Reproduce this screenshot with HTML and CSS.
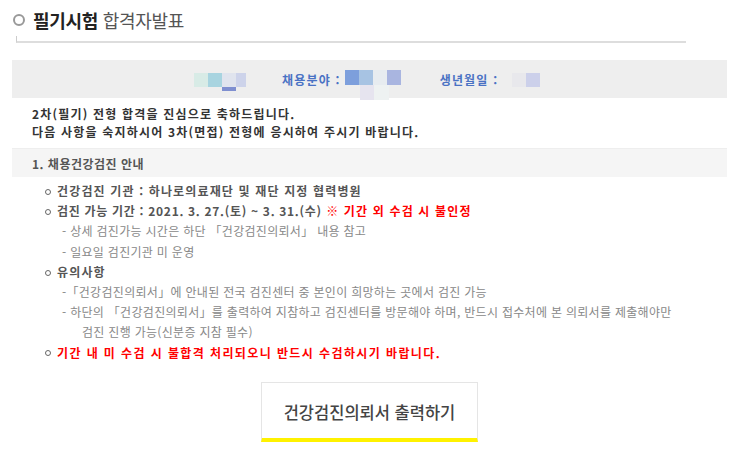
FILE: index.html
```html
<!DOCTYPE html>
<html lang="ko">
<head>
  <meta charset="UTF-8">
  <meta name="viewport" content="width=device-width, initial-scale=1.0">
  <title>필기시험 합격자발표</title>
  <link rel="stylesheet" href="styles.css">
</head>
<body>

  <div class="page">
    <h1 class="title"><span class="ring"></span><b>필기시험</b> 합격자발표</h1>
    <div class="title-line"></div>

    <div class="info-bar">
      <span class="mosaic mosaic-name">
        <i class="c1"></i><i class="c2"></i><i class="c3"></i><i class="c4"></i>
      </span>
      <span class="label label-field">채용분야 :</span>
      <span class="mosaic mosaic-field">
        <i class="c5"></i><i class="c6"></i><i class="c7"></i><i class="c8"></i>
      </span>
      <span class="label label-birth">생년월일 :</span>
      <span class="mosaic mosaic-birth">
        <i class="c9"></i><i class="c10"></i>
      </span>
    </div>

    <div class="greeting">
      <p>2차(필기) 전형 합격을 진심으로 축하드립니다.</p>
      <p>다음 사항을 숙지하시어 3차(면접) 전형에 응시하여 주시기 바랍니다.</p>
    </div>

    <div class="section-head">1. 채용건강검진 안내</div>

    <ul class="notice">
      <li class="point">건강검진 기관 : 하나로의료재단 및 재단 지정 협력병원</li>
      <li class="point"><span class="date">검진 가능 기간 : 2021. 3. 27.(토) ~ 3. 31.(수)</span> <span class="warn">※ 기간 외 수검 시 불인정</span></li>
      <li class="sub">- 상세 검진가능 시간은 하단 「건강검진의뢰서」 내용 참고</li>
      <li class="sub">- 일요일 검진기관 미 운영</li>
      <li class="point">유의사항</li>
      <li class="sub">-「건강검진의뢰서」에 안내된 전국 검진센터 중 본인이 희망하는 곳에서 검진 가능</li>
      <li class="sub">- 하단의 「건강검진의뢰서」를 출력하여 지참하고 검진센터를 방문해야 하며, 반드시 접수처에 본 의뢰서를 제출해야만</li>
      <li class="sub more">검진 진행 가능(신분증 지참 필수)</li>
      <li class="point warn last">기간 내 미 수검 시 불합격 처리되오니 반드시 수검하시기 바랍니다.</li>
    </ul>

    <div class="btn-wrap">
      <a class="print-btn" href="#">건강검진의뢰서 출력하기</a>
    </div>
  </div>

</body>
</html>
```

FILE: styles.css
```css
body {
  margin: 0;
  background-color: #fff;
  font-family: "Noto Sans CJK KR", "Noto Sans", sans-serif;
  font-size: 12px;
  color: #444;
}
.page {
  width: 715px;
  margin-left: 12px;
}
.title {
  display: flex;
  align-items: center;
  margin: 0;
  padding-top: 7px;
  height: 26px;
  font-size: 18px;
  font-weight: 400;
  color: #555;
  letter-spacing: -0.3px;
  white-space: pre;
}
.title b {
  font-weight: 700;
  color: #222;
}
.ring {
  width: 8px;
  height: 8px;
  border: 2.5px solid #999;
  border-radius: 50%;
  margin: 0 8px 0 1px;
}
.title-line {
  width: 669px;
  height: 5px;
  margin: 3px 0 0 4px;
  border-left: 1px solid #ccc;
  border-bottom: 2px solid #ddd;
}

/* 개인정보 모자이크 */
.info-bar {
  display: flex;
  align-items: center;
  height: 38px;
  margin-top: 17px;
  padding-left: 182px;
  background-color: #eee;
}
.mosaic {
  display: flex;
  position: relative;
}
.mosaic i {
  display: block;
  width: 14px;
  height: 14px;
}
.mosaic-name { margin-top: 1px; }
.mosaic-name::after {
  content: "";
  position: absolute;
  left: 28px;
  top: 14px;
  width: 14px;
  height: 4px;
  background-color: #7f8fd0;
}
.c1 { background-color: #d8ebe6; }
.c2 { background-color: #a8d4e0; }
.c3 { background-color: #e0e4ee; }
.c4 { background-color: #cdd3ea; width: 10px !important; }
.mosaic-field { margin: 12px 0 0 4px; height: 30px; }
.mosaic-field i { height: 15px; }
.mosaic-field::after {
  content: "";
  position: absolute;
  left: 15px;
  top: 15px;
  width: 29px;
  height: 15px;
  background: linear-gradient(90deg, #e6e4ef 50%, #eef2f2 50%);
}
.c5 { background-color: #7d9fdc; }
.c6 { background-color: #a7c3e3; }
.c7 { background-color: #e7ecf0; }
.c8 { background-color: #a9b5e0; }
.c9 { background-color: #e8e8ec; }
.c10 { background-color: #ccd0ea; }
.mosaic-birth { margin: 2px 0 0 14px; }
.label {
  font-weight: 700;
  color: #4a72c4;
  letter-spacing: 1.2px;
}
.label-field { margin-left: 36px; }
.label-birth { margin-left: 39px; }

.greeting {
  padding: 7px 0 8px 20px;
  font-weight: 700;
  color: #333;
  line-height: 17.5px;
  letter-spacing: 1.2px;
}
.greeting p {
  margin: 0;
}
.section-head {
  height: 29px;
  line-height: 29px;
  padding-left: 20px;
  background-color: #f5f5f5;
  border-top: 1px solid #eee;
  box-sizing: border-box;
  font-weight: 700;
  color: #555;
  letter-spacing: 0.5px;
}

.notice {
  list-style: none;
  margin: 4px 0 0;
  padding: 0;
  line-height: 20.2px;
  letter-spacing: 0.3px;
}
.notice .point {
  padding-left: 33px;
  font-weight: 700;
  color: #555;
  letter-spacing: 1.15px;
}
.notice .point::before {
  content: "";
  display: inline-block;
  width: 4px;
  height: 4px;
  border: 1px solid #666;
  border-radius: 50%;
  margin: 0 6px 2px 0;
  vertical-align: middle;
}
.notice .date {
  letter-spacing: 0.7px;
}
.notice .last {
  letter-spacing: 1.4px;
}
.notice .sub {
  padding-left: 50px;
  color: #888;
}
.notice .more {
  padding-left: 70px;
}
.warn {
  color: #f00 !important;
  font-weight: 700;
}

.btn-wrap {
  display: flex;
  justify-content: center;
  margin-top: 19px;
}
.print-btn {
  display: flex;
  align-items: center;
  justify-content: center;
  width: 217px;
  height: 60px;
  box-sizing: border-box;
  border: 1px solid #e5e5e5;
  border-bottom: 4px solid #fff200;
  color: #444;
  font-size: 16.5px;
  font-weight: 500;
  text-decoration: none;
  padding-top: 3px;
}
```
